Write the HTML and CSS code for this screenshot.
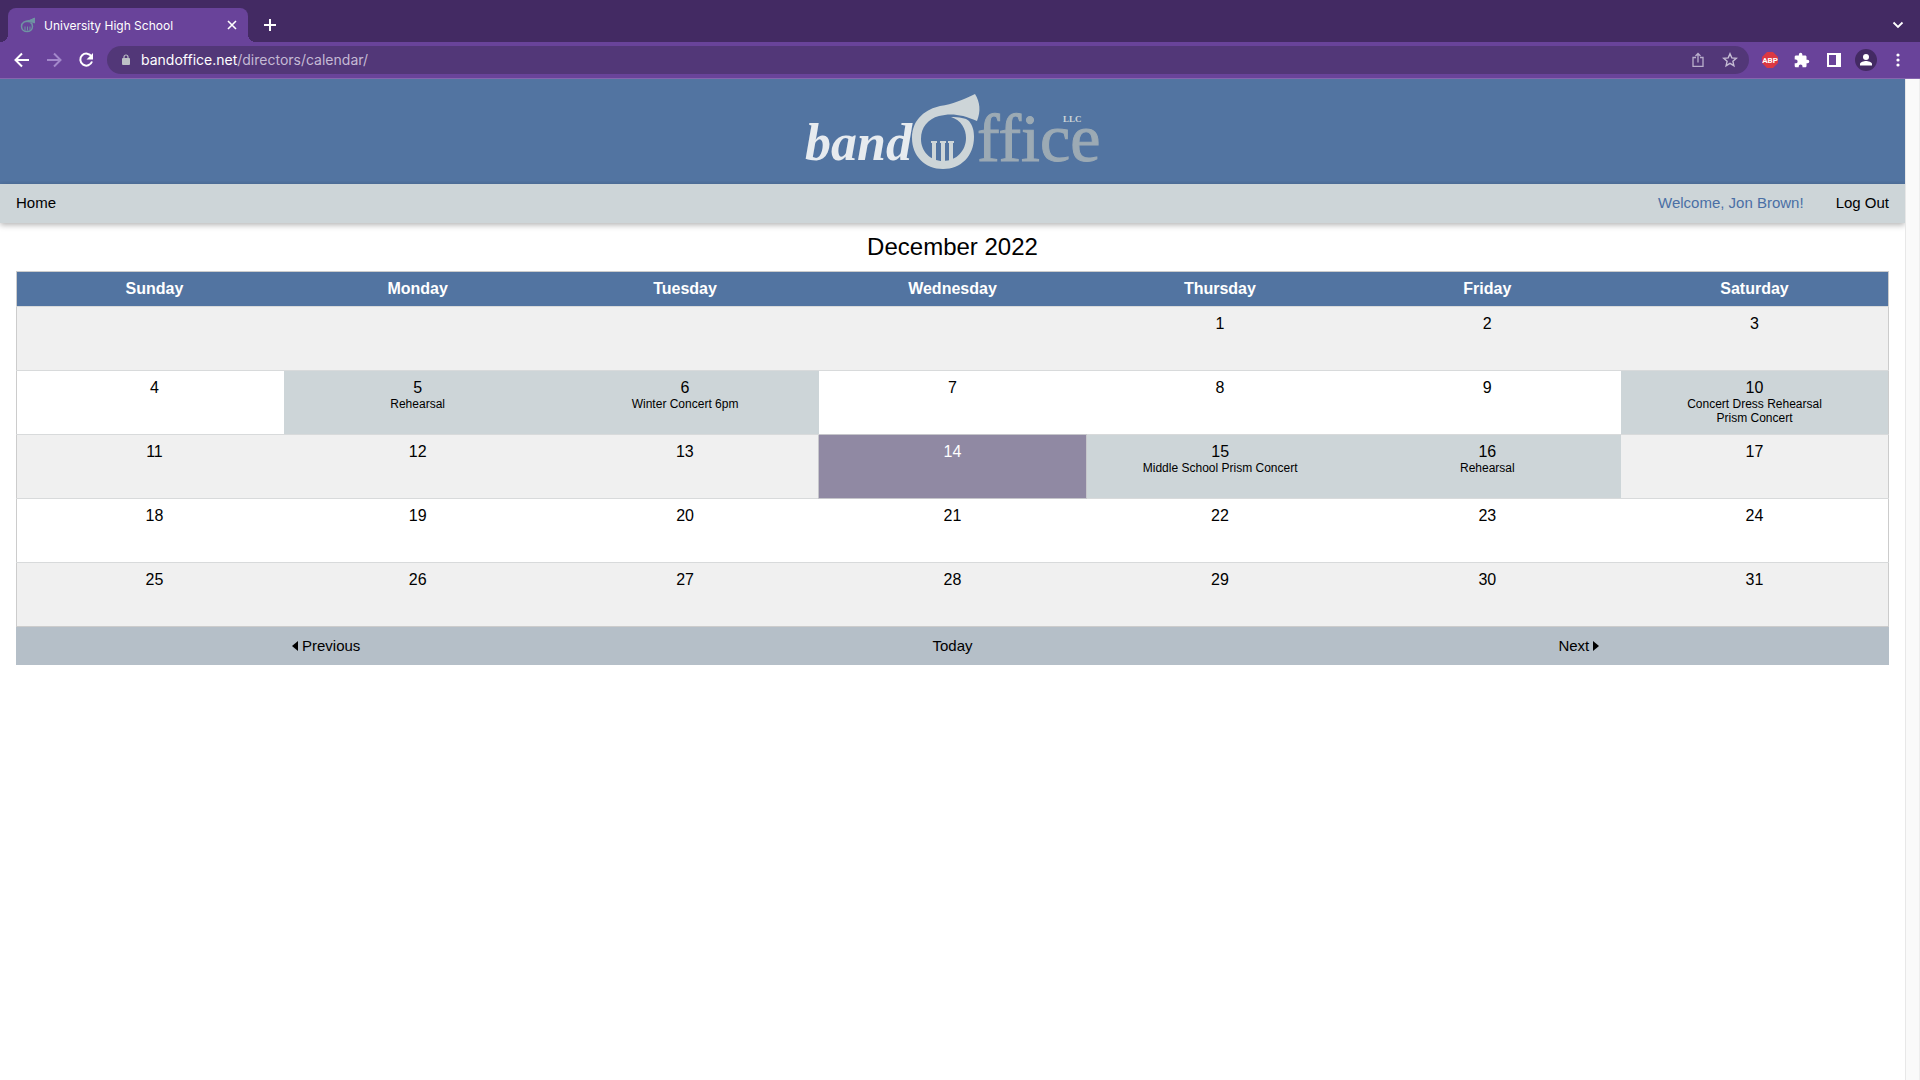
FILE: index.html
```html
<!DOCTYPE html>
<html lang="en">
<head>
  <meta charset="UTF-8">
  <title>University High School</title>
  <link rel="stylesheet" href="styles.css">
</head>
<body>

<div class="browser">
  <div class="tabs">
    <div class="tab">
      <svg class="favicon" width="16" height="16" viewBox="0 0 16 16" fill="none" stroke="#6f93a3">
        <path d="M10 4.5C5 3.500 1.500 5.500 1.500 9.500c0 3 2.500 5 5.500 5s5.500-2 5.500-5c0-2-1-3.500-2-4" stroke-width="1.500"/>
        <path d="M5 4.500C8 4 11 3 14.500 1v5L12 5Z" fill="#6f93a3"/>
        <path d="M5 9.500v4M7.500 9.500v4M10 9.500v4"/>
      </svg>
      <span class="tab-title">University High School</span>
      <button class="close" aria-label="Close tab">
        <svg width="10" height="10" viewBox="0 0 10 10" stroke="#fff" stroke-width="1.600"><path d="M1 1l8 8M9 1l-8 8"/></svg>
      </button>
    </div>
    <button class="new-tab" aria-label="New tab">
      <svg width="12" height="12" viewBox="0 0 12 12" stroke="#fff" stroke-width="2"><path d="M6 0v12M0 6h12"/></svg>
    </button>
    <button class="tab-search" aria-label="Search tabs">
      <svg width="12" height="12" viewBox="0 0 12 12" fill="none" stroke="#fff" stroke-width="1.800"><path d="M1.500 3.500L6 8l4.500-4.500"/></svg>
    </button>
  </div>

  <div class="toolbar">
    <button aria-label="Back">
      <svg width="20" height="20" viewBox="0 0 20 20" fill="none" stroke="#fff" stroke-width="2"><path d="M17 10H4M10 3.500L3.500 10l6.500 6.500"/></svg>
    </button>
    <button aria-label="Forward">
      <svg width="20" height="20" viewBox="0 0 20 20" fill="none" stroke="#a388cb" stroke-width="2"><path d="M3 10h13M10 3.500l6.500 6.500-6.500 6.500"/></svg>
    </button>
    <button aria-label="Reload">
      <svg width="20" height="20" viewBox="0 0 20 20"><path d="M15.500 6.600A6 6 0 1 0 16 11.500" fill="none" stroke="#fff" stroke-width="2"/><path d="M17 3v6.500h-6.500Z" fill="#fff"/></svg>
    </button>
    <div class="address">
      <svg width="10" height="12" viewBox="0 0 10 12"><path d="M2 4h6q1 0 1 1v5q0 1-1 1H2q-1 0-1-1V5q0-1 1-1Z" fill="#bdc1c6"/><path d="M3 4.500V3a2 2 0 0 1 4 0v1.500" fill="none" stroke="#bdc1c6" stroke-width="1.200"/></svg>
      <a class="url" href="#"><b>bandoffice.net</b>/directors/calendar/</a>
      <button aria-label="Share">
        <svg width="16" height="16" viewBox="0 0 16 16" fill="none" stroke="#b9aecb" stroke-width="1.300"><path d="M6 5.500H3v8.800h10V5.500h-3M8 10.500V1.500M5.500 4L8 1.500 10.500 4"/></svg>
      </button>
      <button aria-label="Bookmark">
        <svg width="16" height="16" viewBox="0 0 16 16" fill="none" stroke="#c5bcd4" stroke-width="1.400"><path d="M8 1.800l1.800 4.100 4.500.4-3.400 3 1 4.400L8 11.400l-3.900 2.300 1-4.400-3.400-3 4.500-.4Z"/></svg>
      </button>
    </div>
    <button aria-label="Adblock Plus">
      <svg width="16" height="16" viewBox="0 0 16 16"><path d="M5 0h6l5 5v6l-5 5H5l-5-5V5Z" fill="#db3843"/><text x="8" y="11" text-anchor="middle" class="abp">ABP</text></svg>
    </button>
    <button aria-label="Extensions">
      <svg width="16" height="16" viewBox="1 0 23 23" fill="#fff"><path d="M20.500 11H19V7c0-1.100-.9-2-2-2h-4V3.500a2.500 2.500 0 0 0-5 0V5H4c-1.100 0-2 .9-2 2v3.800h1.500a2.700 2.700 0 0 1 0 5.400H2V20c0 1.100.9 2 2 2h3.800v-1.500a2.700 2.700 0 0 1 5.400 0V22H17c1.100 0 2-.9 2-2v-4h1.500a2.500 2.500 0 0 0 0-5Z"/></svg>
    </button>
    <button aria-label="Side panel">
      <svg width="14" height="14" viewBox="0 0 14 14"><path d="M0 0h14v14H0ZM2 2v10h7V2Z" fill="#fff" fill-rule="evenodd"/></svg>
    </button>
    <button aria-label="Profile">
      <svg width="22" height="22" viewBox="0 0 22 22"><circle cx="11" cy="11" r="11" fill="#432a63"/><circle cx="11" cy="8" r="3" fill="#fff"/><path d="M5 16.500v-1.500c0-2 4-3 6-3s6 1 6 3v1.500Z" fill="#fff"/></svg>
    </button>
    <button aria-label="Menu">
      <svg width="4" height="14" viewBox="0 0 4 14" fill="#fff"><circle cx="2" cy="2" r="1.600"/><circle cx="2" cy="7" r="1.600"/><circle cx="2" cy="12" r="1.600"/></svg>
    </button>
  </div>
</div>

<div class="viewport">
  <div class="page">
    <header class="banner">
      <svg class="logo" width="325" height="104" viewBox="0 -1 325 104" role="img" aria-label="bandOffice LLC">
        <text class="band" x="15" y="80">band</text>
        <!-- horn -->
        <path fill="#cdd5d8" d="M185 14C190 22 191 31 187 41C172 34 160 33 149 36C138 39 131 47 131 59C131 71 140 81 153 81C167 81 176 70 176 58C176 49 171 40 161 37C169 37 176 38 179 41C183 46 184 51 184 57C184 76 171 89 153 89C135 89 122 76 122 58C122 38 137 29 150 26C163 24 172 20 185 14Z"/>
        <!-- valves -->
        <path fill="#cdd5d8" d="M141 61h6v2h-1v18h-4V63h-1ZM150 61h6v2h-1v19h-4V63h-1ZM158 61h6v2h-1v18h-4V63h-1Z"/>
        <text class="ffice" x="187" y="81">ffice</text>
        <text class="llc" x="273" y="42">LLC</text>
      </svg>
    </header>

    <nav class="nav">
      <a href="#">Home</a>
      <span class="welcome">Welcome, Jon Brown!</span>
      <a href="#">Log Out</a>
    </nav>

    <main>
      <h1>December 2022</h1>
      <table class="calendar">
        <thead>
          <tr><th>Sunday</th><th>Monday</th><th>Tuesday</th><th>Wednesday</th><th>Thursday</th><th>Friday</th><th>Saturday</th></tr>
        </thead>
        <tbody>
          <tr><td></td><td></td><td></td><td></td><td>1</td><td>2</td><td>3</td></tr>
          <tr>
            <td>4</td>
            <td class="event">5<p>Rehearsal</p></td>
            <td class="event">6<p>Winter Concert 6pm</p></td>
            <td>7</td>
            <td>8</td>
            <td>9</td>
            <td class="event">10<p>Concert Dress Rehearsal</p><p>Prism Concert</p></td>
          </tr>
          <tr>
            <td>11</td>
            <td>12</td>
            <td>13</td>
            <td class="today">14</td>
            <td class="event">15<p>Middle School Prism Concert</p></td>
            <td class="event">16<p>Rehearsal</p></td>
            <td>17</td>
          </tr>
          <tr><td>18</td><td>19</td><td>20</td><td>21</td><td>22</td><td>23</td><td>24</td></tr>
          <tr><td>25</td><td>26</td><td>27</td><td>28</td><td>29</td><td>30</td><td>31</td></tr>
        </tbody>
      </table>
      <div class="pager">
        <a class="prev" href="#"><svg width="6" height="10" viewBox="0 0 6 10"><path d="M6 0v10L0 5Z"/></svg>Previous</a>
        <a href="#">Today</a>
        <a class="next" href="#">Next<svg width="6" height="10" viewBox="0 0 6 10"><path d="M0 0v10l6-5Z"/></svg></a>
      </div>
    </main>
  </div>
  <div class="scrollbar"></div>
</div>

</body>
</html>
```
FILE: styles.css
```css
* {
  box-sizing: border-box;
}
body {
  margin: 0;
  min-height: 100vh;
  display: flex;
  flex-direction: column;
  font-family: "Liberation Sans", Arial, sans-serif;
  font-size: 16px;
  color: #000;
  background: #fff;
}
a {
  color: inherit;
  text-decoration: none;
}
button {
  display: flex;
  align-items: center;
  justify-content: center;
  padding: 0;
  border: none;
  background: none;
  cursor: pointer;
}

/* browser */
.browser {
  font-family: Inter, Roboto, sans-serif;
  color: #fff;
  background: #432a63;
}
.tabs {
  display: flex;
  align-items: flex-end;
  height: 42px;
  padding: 0 16px 0 8px;
}
.tab {
  position: relative;
  display: flex;
  align-items: center;
  width: 240px;
  height: 34px;
  padding: 0 11px 0 12px;
  border-radius: 8px 8px 0 0;
  background: #69439a;
}
.tab::before,
.tab::after {
  content: "";
  position: absolute;
  bottom: 0;
  width: 8px;
  height: 8px;
}
.tab::before {
  left: -8px;
  background: radial-gradient(circle at 0 0, #432a63 8px, #69439a 8px);
}
.tab::after {
  right: -8px;
  background: radial-gradient(circle at 100% 0, #432a63 8px, #69439a 8px);
}
.tab-title {
  flex: 1;
  margin-left: 8px;
  font-size: 12px;
}
.new-tab {
  height: 34px;
  margin-left: 16px;
}
.tab-search {
  height: 34px;
  margin-left: auto;
}
.toolbar {
  display: flex;
  align-items: center;
  gap: 10px;
  height: 37px;
  padding: 0 11px;
  border-bottom: 1px solid #8666ae;
  background: #69439a;
}
.toolbar button {
  width: 22px;
}
.address {
  flex: 1;
  display: flex;
  align-items: center;
  height: 28px;
  gap: 10px;
  padding: 0 8px 0 14px;
  border-radius: 14px;
  background: #523778;
}
.url {
  flex: 1;
  padding-bottom: 1px;
  font-size: 14px;
  color: #c5bad5;
}
.url b {
  font-weight: normal;
  color: #fff;
}
.abp {
  font: bold 8px Roboto, sans-serif;
  fill: #fff;
}

/* page */
.viewport {
  flex: 1;
  display: flex;
}
.page {
  flex: 1;
}
.scrollbar {
  width: 15px;
  border-left: 1px solid #e8e8e8;
  border-right: 1px solid #eee;
  background: #fafafa;
}
.banner {
  display: flex;
  justify-content: center;
  height: 105px;
  background: #5274a1;
}
.band {
  font: italic bold 52px "Liberation Serif", serif;
  fill: #e7ebef;
}
.ffice {
  font: 68px "Liberation Serif", serif;
  fill: #9caab4;
  stroke: #9caab4;
}
.llc {
  font: bold 9px "Liberation Serif", serif;
  fill: #cdd5d8;
}
.nav {
  display: flex;
  align-items: center;
  gap: 32px;
  height: 39px;
  padding: 0 16px 2px;
  font-size: 15px;
  background: #cdd5d8;
  box-shadow: 0 2px 6px rgba(0, 0, 0, 0.3);
  clip-path: inset(-3px 0 -12px 0);
}
.welcome {
  margin-left: auto;
  color: #4a6fa5;
}
main {
  padding: 0 16px;
}
h1 {
  margin: 0;
  font-size: 24px;
  font-weight: normal;
  line-height: 48px;
  text-align: center;
}
.calendar {
  width: 100%;
  table-layout: fixed;
  border-collapse: collapse;
  border: 1px solid #ccc;
  text-align: center;
}
.calendar th {
  height: 35px;
  padding: 0;
  color: #fff;
  background: #5274a1;
}
.calendar td {
  height: 64px;
  padding: 8px 0 0;
  border-top: 1px solid #d8dadb;
  line-height: 18px;
  vertical-align: top;
}
.calendar th:first-child,
.calendar td:first-child {
  padding-left: 8px;
}
.calendar tbody tr:nth-child(odd) {
  background: #f0f0f0;
}
.calendar p {
  margin: 0;
  font-size: 12px;
  line-height: 14px;
}
.calendar .event {
  background: #cdd5d8;
}
.calendar .today {
  color: #fff;
  background: #9089a3;
  border: 1px solid #c6c6cb;
}
.pager {
  display: grid;
  grid-template-columns: repeat(3, 1fr);
  background: #b5bfc8;
  font-size: 15px;
  line-height: 38px;
  text-align: center;
}
.prev {
  padding-right: 4px;
}
.prev svg {
  margin-right: 4px;
}
.next {
  padding-left: 4px;
}
.next svg {
  margin-left: 4px;
}
```
